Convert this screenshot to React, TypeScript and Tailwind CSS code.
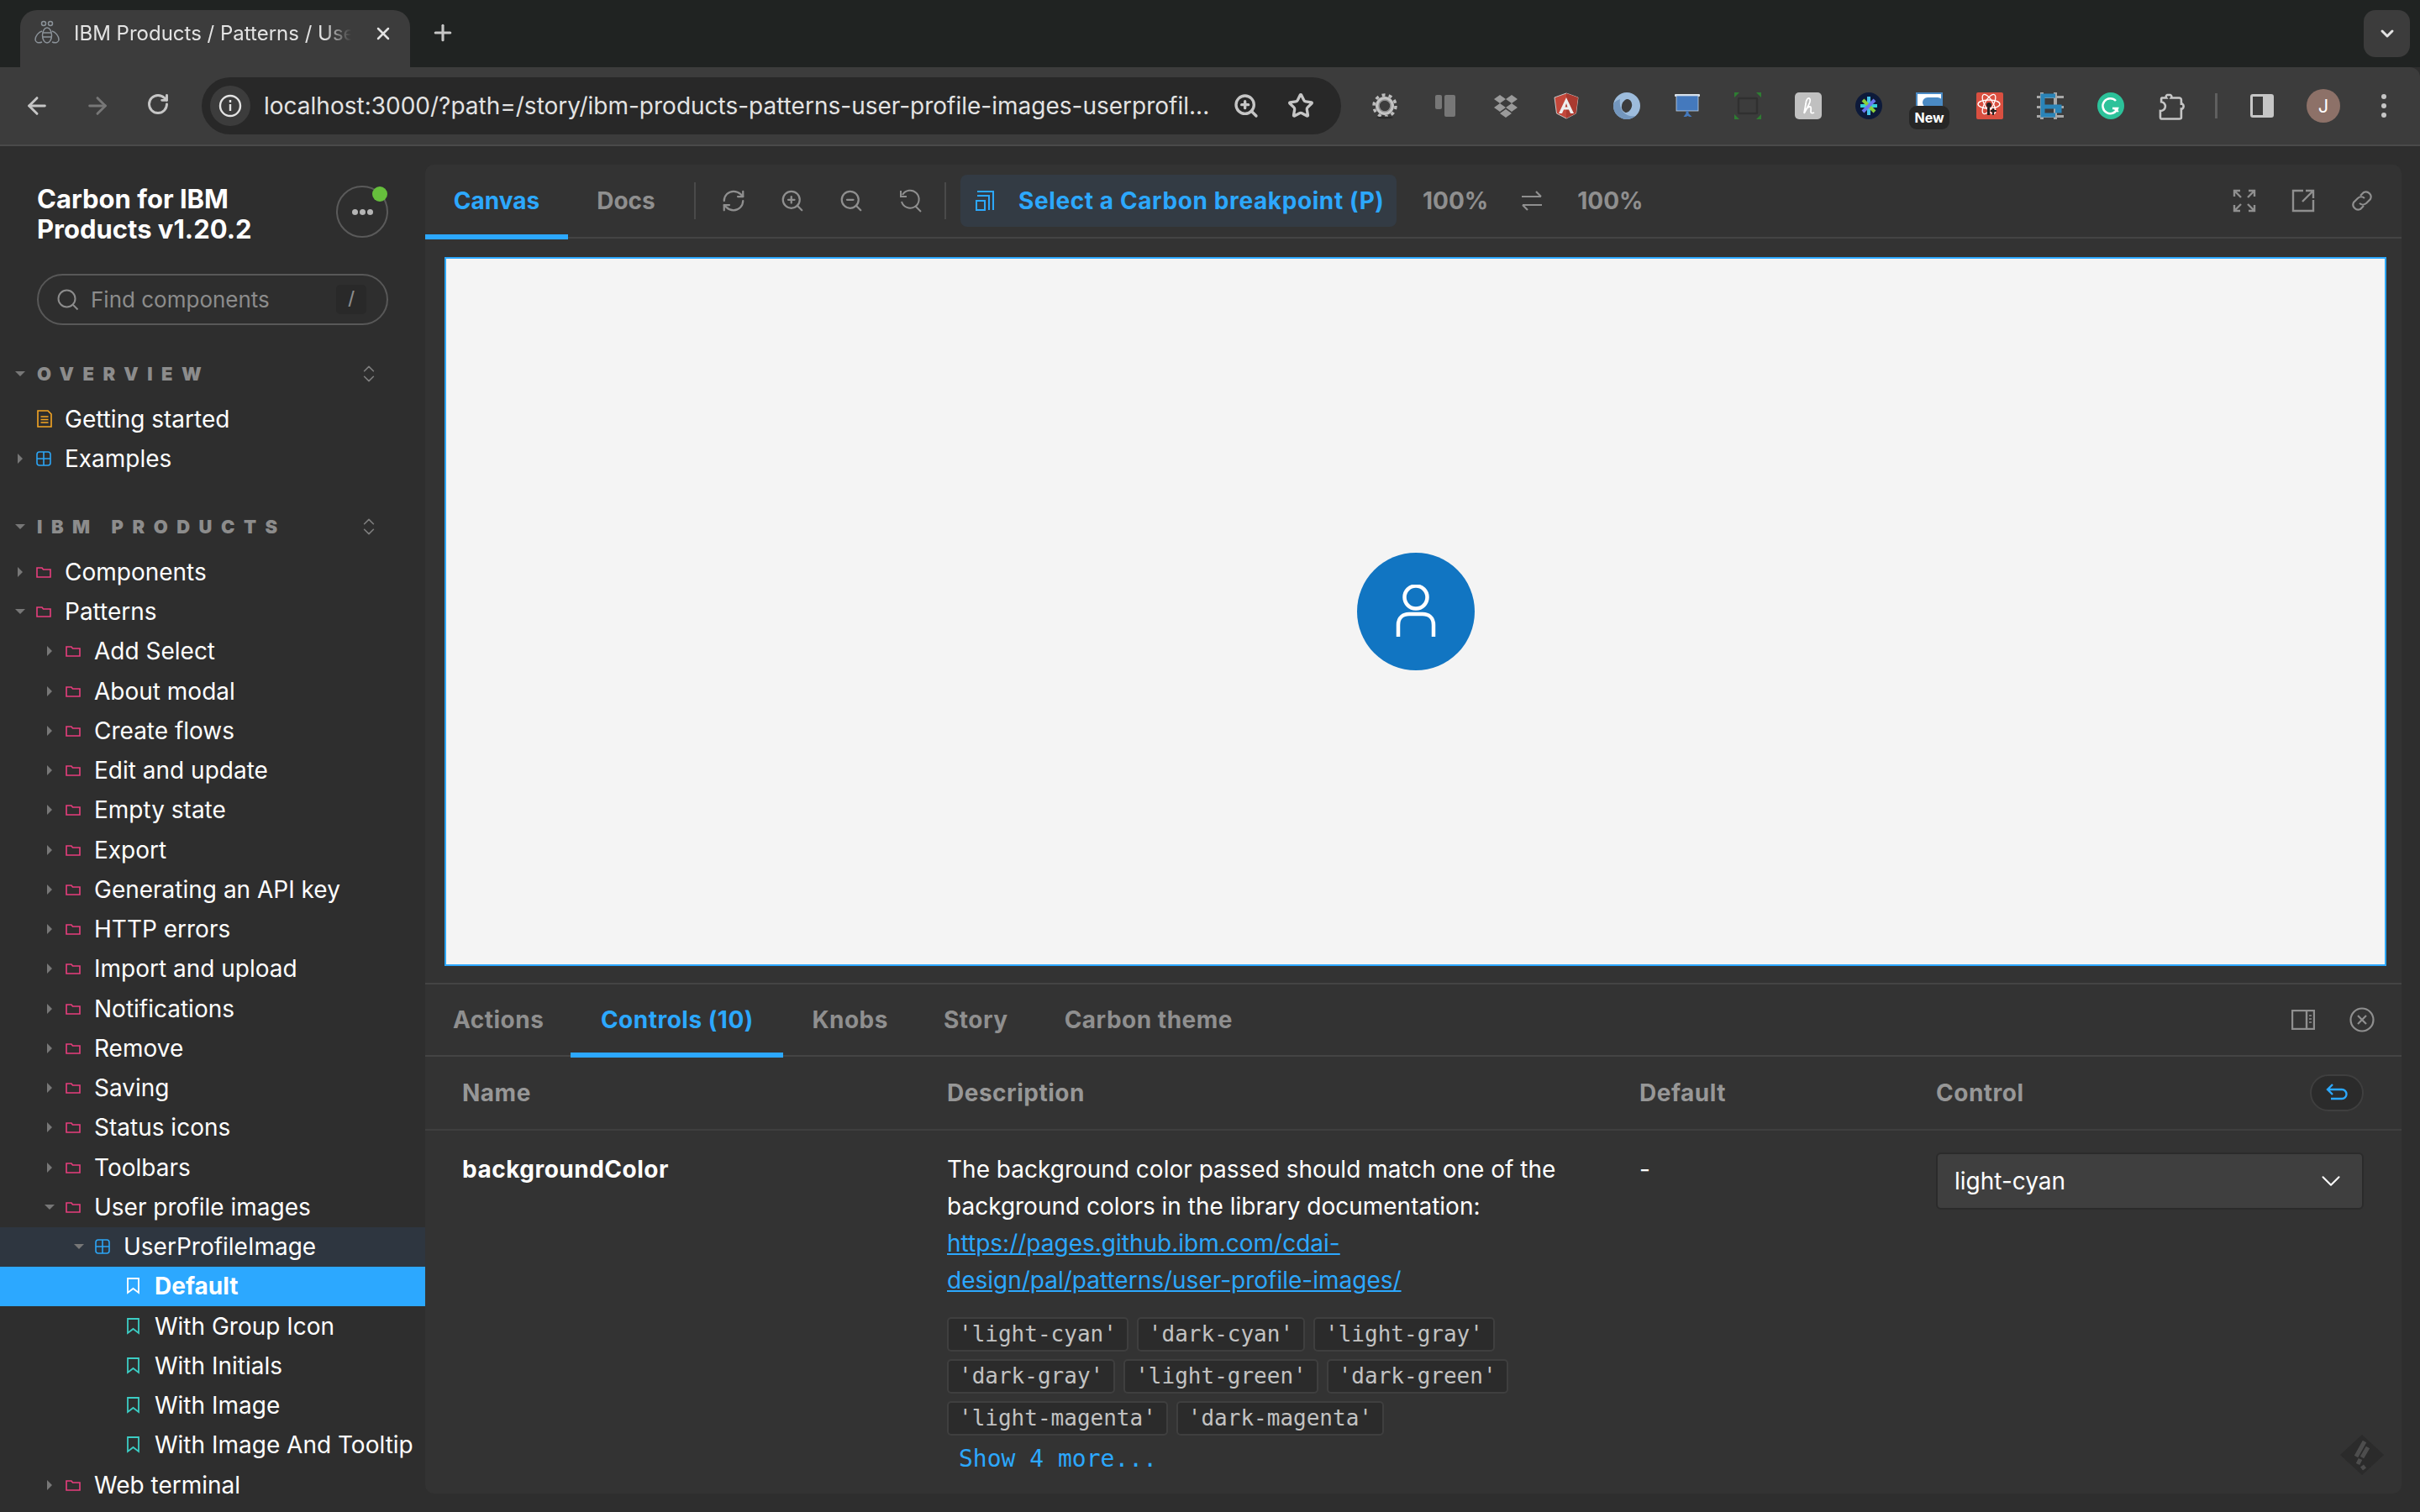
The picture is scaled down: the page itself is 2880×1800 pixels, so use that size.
import type { ReactNode } from "react";
import { ArrowLeft, ArrowRight, RotateCw, X, Plus, ChevronDown, Star, ZoomIn, ZoomOut, RefreshCw, ChevronsUpDown } from "lucide-react";

const sans = "font-['Inter','Liberation_Sans',sans-serif]";

function Svg({ size = 32, children, className }: { size?: number; children: ReactNode; className?: string }) {
    return (
        <svg width={size} height={size} viewBox="0 0 32 32" fill="none" className={className}>
            {children}
        </svg>
    );
}

const extensionIcons: ReactNode[] = [
    <Svg key="gear">
        <circle cx="16" cy="16" r="11" fill="#c4c4c4" />
        <circle cx="16" cy="16" r="13" stroke="#bdbdbd" strokeWidth="3.5" strokeDasharray="4 4.2" />
        <circle cx="16" cy="16" r="6.5" fill="#3c3c3c" />
        <circle cx="16" cy="16" r="7" stroke="#8b8b8b" strokeWidth="1.5" />
        <ellipse cx="16" cy="30" rx="10" ry="1.5" fill="#2a2a2a" />
    </Svg>,
    <Svg key="trello">
        <rect x="4" y="3" width="8" height="17" rx="2" fill="#777" />
        <rect x="15" y="3" width="13" height="26" rx="2" fill="#777" />
    </Svg>,
    <Svg key="dropbox">
        <path d="M9 3l7 5-7 5-7-5zM23 3l7 5-7 5-7-5zM9 13l7 5-7 5-7-5zM23 13l7 5-7 5-7-5zM16 20l7 5-7 5-7-5z" fill="#9a9a9a" />
    </Svg>,
    <Svg key="angular">
        <path d="M16 1L30 6l-2.5 19L16 31 4.500 25 2 6z" fill="#c4473a" stroke="#c9c9c9" strokeWidth="1" />
        <path d="M16 1L30 6l-2.5 19L16 31z" fill="#a93a30" />
        <path d="M16 6L7 25h4l2-4.500h6l2 4.500h4zM14.500 17.500L16 13l1.500 4.500z" fill="#eeeeee" />
    </Svg>,
    <Svg key="ring">
        <circle cx="16" cy="16" r="16" fill="#9dbcdc" />
        <path d="M0 16a16 16 0 0 0 16 16c4 0 8-2 10-4-10 2-20-6-18-20-5 2-8 4-8 8z" fill="#7396bd" />
        <ellipse cx="16" cy="16" rx="6" ry="8" transform="rotate(15 16 16)" fill="#3c3c3c" />
    </Svg>,
    <Svg key="board">
        <rect x="1" y="2" width="30" height="3" rx="1" fill="#dce4ec" />
        <rect x="3" y="4" width="26" height="18" fill="#4479bd" stroke="#c4d3e4" strokeWidth="0.8" />
        <path d="M14.500 22h3v3l4 4h-3l-2-1-2 1h-3l3-4z" fill="#4479bd" />
    </Svg>,
    <Svg key="frame">
        <path d="M0 0h6L0 6zM32 0v6l-6-6zM0 32v-6l6 6zM32 32h-6l6-6z" fill="#2e7d32" />
        <rect x="5" y="7" width="22" height="18" rx="1" stroke="#303030" strokeWidth="2.500" />
    </Svg>,
    <Svg key="honey">
        <rect width="32" height="32" rx="5" fill="#c0c0c0" />
        <path d="M11 25C14 19 20 11 18 8 16 5 13 9 13 14L11 25C13 20 16 17 18 17 20 17 19 21 19 23 19 25 21 25 23 24" stroke="#fff" strokeWidth="1.800" />
    </Svg>,
    <Svg key="star">
        <circle cx="16" cy="16" r="16" fill="#0d1a3a" />
        <path d="M16 5v22" stroke="#44c4e8" strokeWidth="4" />
        <path d="M6 16h20" stroke="#35cfd8" strokeWidth="4" />
        <path d="M9 9l14 14" stroke="#8dd03a" strokeWidth="4" />
        <path d="M23 9L9 23" stroke="#6a76ee" strokeWidth="4" />
    </Svg>,
    <div key="new" className="relative w-[32px] h-[32px]">
        <div className="w-[32px] h-[20px] bg-white border-2 border-[#4a8ac4] overflow-hidden">
            <div className="w-[24px] h-[12px] ml-[6px] mt-[4px] rounded-full bg-[#4a8ac4]" />
        </div>
        <span className={`${sans} absolute left-[-8px] top-[16px] w-[48px] h-[28px] rounded-[9px] bg-[#262626] text-white text-[16px] font-bold flex items-center justify-center`}>New</span>
    </div>,
    <Svg key="atom">
        <rect width="32" height="32" rx="2" fill="#d94f40" />
        <g stroke="#fff" strokeWidth="1.3">
            <ellipse cx="15" cy="14" rx="13" ry="5" />
            <ellipse cx="15" cy="14" rx="13" ry="5" transform="rotate(60 15 14)" />
            <ellipse cx="15" cy="14" rx="13" ry="5" transform="rotate(120 15 14)" />
        </g>
        <circle cx="15" cy="15" r="3" fill="#222" />
        <path d="M13 18h3v9h-3zM19 19h2v8h-2zM17 21h7v2h-7z" fill="#222" />
    </Svg>,
    <Svg key="circuit">
        <g fill="#a8a8a8">
            <rect x="4" y="0" width="4" height="32" />
            <rect x="20" y="0" width="4" height="32" />
            <rect x="0" y="4" width="32" height="3" />
            <rect x="0" y="16" width="32" height="3" />
            <rect x="0" y="27" width="32" height="3" />
        </g>
        <path d="M22 4H7v23h15" stroke="#2a84b8" strokeWidth="5" />
        <path d="M7 17h20v5h-5" stroke="#2a84b8" strokeWidth="5" />
    </Svg>,
    <Svg key="grammarly">
        <circle cx="16" cy="16" r="16" fill="#2cc29a" />
        <path d="M22 10a9 9 0 1 0 2 9h-6" stroke="#fff" strokeWidth="2.500" />
        <path d="M20 19l5 4" stroke="#fff" strokeWidth="2" />
    </Svg>,
    <Svg key="puzzle" size={38}>
        <path d="M7 8h5a2 2 0 0 1 1-3h3a2 2 0 0 1 1 3h8c1 0 2 1 2 2v4h1a3 3 0 0 1 0 5h-1v9c0 1-1 1-2 1H7c-1 0-1-1-1-2v-6a4 4 0 0 0 1-9V9c0-1 0-1 1-1z" stroke="#c6c6c6" strokeWidth="2.200" transform="translate(-1 0)" />
    </Svg>,
];

type Kind = "folder" | "component" | "story" | "doc";

const treeRows: { label: string; level: number; kind: Kind; open?: boolean; noArrow?: boolean; hover?: boolean; active?: boolean }[] = [
    { label: "Components", level: 0, kind: "folder" },
    { label: "Patterns", level: 0, kind: "folder", open: true },
    { label: "Add Select", level: 1, kind: "folder" },
    { label: "About modal", level: 1, kind: "folder" },
    { label: "Create flows", level: 1, kind: "folder" },
    { label: "Edit and update", level: 1, kind: "folder" },
    { label: "Empty state", level: 1, kind: "folder" },
    { label: "Export", level: 1, kind: "folder" },
    { label: "Generating an API key", level: 1, kind: "folder" },
    { label: "HTTP errors", level: 1, kind: "folder" },
    { label: "Import and upload", level: 1, kind: "folder" },
    { label: "Notifications", level: 1, kind: "folder" },
    { label: "Remove", level: 1, kind: "folder" },
    { label: "Saving", level: 1, kind: "folder" },
    { label: "Status icons", level: 1, kind: "folder" },
    { label: "Toolbars", level: 1, kind: "folder" },
    { label: "User profile images", level: 1, kind: "folder", open: true },
    { label: "UserProfileImage", level: 2, kind: "component", open: true, hover: true },
    { label: "Default", level: 3, kind: "story", noArrow: true, active: true },
    { label: "With Group Icon", level: 3, kind: "story", noArrow: true },
    { label: "With Initials", level: 3, kind: "story", noArrow: true },
    { label: "With Image", level: 3, kind: "story", noArrow: true },
    { label: "With Image And Tooltip", level: 3, kind: "story", noArrow: true },
    { label: "Web terminal", level: 1, kind: "folder" },
];

function KindIcon({ kind, active }: { kind: Kind; active?: boolean }) {
    if (kind === "folder") {
        return (
            <svg width="18" height="14" viewBox="0 0 18 14" fill="none" stroke="#e83e7d" strokeWidth="1.6">
                <path d="M1 2h6l1.500 2H17v9H1z" />
            </svg>
        );
    }
    if (kind === "component") {
        return (
            <svg width="18" height="18" viewBox="0 0 18 18" fill="none" stroke="#2ca5f5" strokeWidth="1.6">
                <rect x="1" y="1" width="16" height="16" rx="3" />
                <path d="M9 1v16M1 9h16" />
            </svg>
        );
    }
    if (kind === "doc") {
        return (
            <svg width="18" height="21" viewBox="0 0 18 21" fill="none" stroke="#f5a623" strokeWidth="1.6">
                <path d="M1 1h12l4 4v15H1z" />
                <path d="M4.500 8h9M4.500 11.500h9M4.500 15h9" />
            </svg>
        );
    }
    return (
        <svg width="15" height="20" viewBox="0 0 15 20" fill="none" stroke={active ? "#ffffff" : "#3ccdc4"} strokeWidth="1.8">
            <path d="M1 1h13v17l-6.500-5L1 18z" />
        </svg>
    );
}

function Caret({ open }: { open?: boolean }) {
    return open ? (
        <div className="w-0 h-0 border-x-[6px] border-x-transparent border-t-[6px] border-t-[#777777]" />
    ) : (
        <div className="w-0 h-0 border-y-[6px] border-y-transparent border-l-[6px] border-l-[#777777]" />
    );
}

function TreeRow({ label, level, kind, open, noArrow, hover, active }: (typeof treeRows)[number]) {
    const indent = ["pl-[18px]", "pl-[53px]", "pl-[88px]", "pl-[123px]"][level];
    return (
        <div className={`flex items-center h-[47.25px] ${indent} ${hover ? "bg-[#2e3640]" : ""} ${active ? "bg-[#2ca8ff] font-bold" : ""}`}>
            <div className="w-[12px] flex justify-center shrink-0">{!noArrow && <Caret open={open} />}</div>
            <div className={`w-[18px] flex justify-center shrink-0 ${level === 3 ? "ml-[14px]" : "ml-[13px]"}`}>
                <KindIcon kind={kind} active={active} />
            </div>
            <span className={`text-[28px] leading-none text-white whitespace-nowrap ${level === 3 ? "ml-[17px]" : "ml-[16px]"}`}>{label}</span>
        </div>
    );
}

function SectionHead({ label }: { label: string }) {
    return (
        <div className="flex items-center h-[40px] pl-[18px] pr-[54px]">
            <div className="w-[12px] flex justify-center"><Caret open /></div>
            <span className="ml-[14px] text-[22px] font-black tracking-[10.500px] text-[#8c8c8c] whitespace-nowrap flex-1">{label}</span>
            <ChevronsUpDown size={26} strokeWidth={1.5} className="text-[#7d7d7d]" />
        </div>
    );
}

function ToolIcon({ children }: { children: ReactNode }) {
    return <div className="w-[70px] h-[40px] flex items-center justify-center text-[#8f8f8f]">{children}</div>;
}

function Sidebar() {
    return (
        <div className="w-[506px] shrink-0 bg-[#2e2e2e]">
            <div className="flex items-start justify-between pl-[44px] pr-[44px] pt-[47px]">
                <div className="text-[31px] leading-[36px] font-bold text-white mt-[-2px]">
                    Carbon for IBM<br />Products v1.20.2
                </div>
                <div className="relative w-[62px] h-[62px] rounded-full border-2 border-[#5a5a5a] flex items-center justify-center gap-[2px]">
                    <span className="w-[7px] h-[7px] rounded-full bg-[#b5b5b5]" />
                    <span className="w-[7px] h-[7px] rounded-full bg-[#b5b5b5]" />
                    <span className="w-[7px] h-[7px] rounded-full bg-[#b5b5b5]" />
                    <span className="absolute right-[-1px] top-[-1px] w-[18px] h-[18px] rounded-full bg-[#66bf3c]" />
                </div>
            </div>
            <div className="mx-[44px] mt-[35px] h-[61px] rounded-full border-2 border-[#585858] flex items-center pl-[22px] pr-[24px]">
                <svg width="26" height="26" viewBox="0 0 26 26" fill="none" stroke="#8c8c8c" strokeWidth="2">
                    <circle cx="11.500" cy="11.500" r="10" />
                    <path d="M18.500 18.500l6 6" />
                </svg>
                <span className="ml-[14px] text-[26px] text-[#8c8c8c] flex-1">Find components</span>
                <span className="w-[36px] h-[35px] rounded-[5px] bg-[#292929] text-[#8c8c8c] text-[26px] flex items-center justify-center font-['Liberation_Sans',sans-serif]">/</span>
            </div>
            <div className="mt-[38px]"><SectionHead label="OVERVIEW" /></div>
            <div className="mt-[10px] flex items-center h-[47px] pl-[44px]">
                <KindIcon kind="doc" />
                <span className="ml-[15px] text-[28px] leading-none text-white">Getting started</span>
            </div>
            <TreeRow label="Examples" level={0} kind="component" />
            <div className="mt-[38px]"><SectionHead label="IBM PRODUCTS" /></div>
            <div className="mt-[10px]">
                {treeRows.map((row) => (
                    <TreeRow key={row.label} {...row} />
                ))}
            </div>
        </div>
    );
}

function CanvasBar() {
    return (
        <div className="h-[88px] flex items-center border-b-2 border-[#444444] relative">
            <div className="w-[170px] h-[88px] flex items-center justify-center text-[#2ca8ff] text-[28px] font-bold relative">
                Canvas
                <span className="absolute left-0 right-0 bottom-[-2px] h-[6px] bg-[#2ca8ff]" />
            </div>
            <div className="w-[134px] text-center text-[28px] font-bold text-[#8f8f8f] ml-[2px]">Docs</div>
            <div className="w-[2px] h-[44px] bg-[#4a4a4a] ml-[14px]" />
            <div className="ml-[10px] flex">
                <ToolIcon><RefreshCw size={30} strokeWidth={1.8} /></ToolIcon>
                <ToolIcon><ZoomIn size={30} strokeWidth={1.8} /></ToolIcon>
                <ToolIcon><ZoomOut size={30} strokeWidth={1.8} /></ToolIcon>
                <ToolIcon>
                    <svg width="30" height="30" viewBox="0 0 30 30" fill="none" stroke="currentColor" strokeWidth="2">
                        <path d="M6 8a10.500 10.500 0 1 1-1 8" />
                        <path d="M4 3v7h7" />
                        <path d="M21 21l7 7" />
                    </svg>
                </ToolIcon>
            </div>
            <div className="w-[2px] h-[44px] bg-[#4a4a4a] ml-[6px]" />
            <div className="ml-[17px] w-[519px] h-[62px] rounded-[8px] bg-[#333b44] flex items-center pl-[18px] text-[#2ca8ff] text-[28px] font-bold tracking-[0.600px]">
                <svg width="22" height="24" viewBox="0 0 22 24" fill="none" stroke="currentColor" strokeWidth="2">
                    <path d="M2 1h19v22M2 6h14v17M1 12h10v11H1z" />
                </svg>
                <span className="ml-[29px] whitespace-nowrap">Select a Carbon breakpoint (P)</span>
            </div>
            <span className="ml-[31px] text-[28px] font-bold text-[#8f8f8f]">100%</span>
            <svg className="ml-[38px] text-[#8f8f8f]" width="28" height="26" viewBox="0 0 28 26" fill="none" stroke="currentColor" strokeWidth="2.200">
                <path d="M2 8h23M19 2l6 6M26 18H3M9 24l-6-6" />
            </svg>
            <span className="ml-[40px] text-[28px] font-bold text-[#8f8f8f]">100%</span>
            <div className="ml-auto flex items-center pr-[6px]">
                <div className="w-[70px] flex justify-center text-[#8f8f8f]">
                    <svg width="28" height="28" viewBox="0 0 28 28" fill="none" stroke="currentColor" strokeWidth="2.400">
                        <path d="M2 9V2h7M19 2h7v7M2 19v7h7M26 19v7h-7M3 3l7 7M25 3l-7 7M3 25l7-7M25 25l-7-7" />
                    </svg>
                </div>
                <div className="w-[70px] flex justify-center text-[#8f8f8f]">
                    <svg width="28" height="28" viewBox="0 0 28 28" fill="none" stroke="currentColor" strokeWidth="2.400">
                        <path d="M14 2H2v24h24V13M17 2h9v9M26 2L13 15" />
                    </svg>
                </div>
                <div className="w-[70px] flex justify-center text-[#8f8f8f]">
                    <svg width="28" height="28" viewBox="0 0 28 28" fill="none" stroke="currentColor" strokeWidth="2.200">
                        <path d="M12 8l4-4a6 6 0 0 1 8 8l-5 5a6 6 0 0 1-8 0" />
                        <path d="M16 20l-4 4a6 6 0 0 1-8-8l5-5a6 6 0 0 1 8 0" />
                    </svg>
                </div>
                <div className="w-[6px]" />
            </div>
        </div>
    );
}

const chips = ["light-cyan", "dark-cyan", "light-gray", "dark-gray", "light-green", "dark-green", "light-magenta", "dark-magenta"];

function ControlsPanel() {
    return (
        <div className="flex-1 border-t-2 border-[#444444] relative">
            <div className="h-[86px] flex items-center border-b-2 border-[#444444] text-[28px] font-bold tracking-[0.500px] text-[#8f8f8f]">
                <div className="pl-[33px] pr-[32px] whitespace-nowrap">Actions</div>
                <div className="relative h-[86px] w-[253px] flex items-center justify-center text-[#2ca8ff] whitespace-nowrap">
                    Controls (10)
                    <span className="absolute left-0 right-0 bottom-[-2px] h-[6px] bg-[#2ca8ff]" />
                </div>
                <div className="pl-[34px] pr-[33px] whitespace-nowrap">Knobs</div>
                <div className="px-[33px] whitespace-nowrap">Story</div>
                <div className="px-[34px] whitespace-nowrap">Carbon theme</div>
                <div className="ml-auto flex items-center pr-[12px]">
                    <div className="w-[70px] flex justify-center">
                        <svg width="28" height="24" viewBox="0 0 28 24" fill="none" stroke="#8f8f8f" strokeWidth="2.400">
                            <rect x="1" y="1" width="26" height="22" />
                            <path d="M18 1v22" />
                            <path d="M21 7h3M21 11h3M21 15h3" strokeWidth="1.500" />
                        </svg>
                    </div>
                    <div className="w-[70px] flex justify-center">
                        <svg width="30" height="30" viewBox="0 0 30 30" fill="none" stroke="#8f8f8f" strokeWidth="2.200">
                            <circle cx="15" cy="15" r="13.500" />
                            <path d="M10 10l10 10M20 10L10 20" />
                        </svg>
                    </div>
                </div>
            </div>
            <div className="grid grid-cols-[577px_824px_353px_509px] items-center h-[88px] pl-[44px] border-b-2 border-[#3f3f3f] text-[28px] font-bold tracking-[0.500px] text-[#979797]">
                <div>Name</div>
                <div>Description</div>
                <div>Default</div>
                <div className="flex items-center justify-between">
                    Control
                    <div className="w-[64px] h-[44px] rounded-full bg-[#2b2b2b] border-2 border-[#3f3f3f] flex items-center justify-center">
                        <svg width="28" height="24" viewBox="0 0 28 24" fill="none" stroke="#2ca8ff" strokeWidth="2.400">
                            <path d="M9 2L3 8l6 6M3 8h17a5 5 0 0 1 0 11H7" />
                        </svg>
                    </div>
                </div>
            </div>
            <div className="grid grid-cols-[577px_824px_353px_509px] items-start pl-[44px] pt-[24px] text-[28px] text-white">
                <div className="font-bold tracking-[0.500px] leading-[44px]">backgroundColor</div>
                <div>
                    <div className="w-[760px] leading-[44px]">
                        The background color passed should match one of the background colors in the library documentation:{" "}
                        <span className="text-[#2ca8ff] underline">https://pages.github.ibm.com/cdai-design/pal/patterns/user-profile-images/</span>
                    </div>
                    <div className="w-[690px] flex flex-wrap gap-x-[10px] gap-y-[9px] mt-[22px] font-['DejaVu_Sans_Mono',monospace] text-[26px] text-[#c2c2c2]">
                        {chips.map((chip) => (
                            <span key={chip} className="h-[41px] px-[12px] flex items-center rounded-[5px] bg-[#2b2b2b] border-2 border-[#3f3f3f] whitespace-nowrap">
                                &apos;{chip}&apos;
                            </span>
                        ))}
                    </div>
                    <div className="mt-[10px] pl-[14px] font-['DejaVu_Sans_Mono',monospace] text-[28px] leading-[36px] text-[#2ca8ff]">Show 4 more...</div>
                </div>
                <div className="leading-[44px]">-</div>
                <div className="mt-[2px] h-[68px] rounded-[6px] bg-[#3f3f3f] border-2 border-[#2b2b2b] flex items-center justify-between pl-[20px] pr-[18px]">
                    light-cyan
                    <ChevronDown size={38} strokeWidth={1.3} className="text-white" />
                </div>
            </div>
            <svg className="absolute right-[21px] bottom-[22px]" width="52" height="48" viewBox="0 0 52 48">
                <path d="M26 0l26 24-26 24L0 24z" fill="#2b2b2b" />
                <path d="M29 8L19 26M33 15l-7 12M24 29l-3 6M26 37l3 4" stroke="#4d4d4d" strokeWidth="5" />
            </svg>
        </div>
    );
}

export default function App() {
    return (
        <div className={`${sans} w-[2880px] h-[1800px] overflow-hidden bg-[#2e2e2e] flex flex-col`}>
            {/* browser tab strip */}
            <div className="h-[80px] bg-[#202322] flex items-end pl-[24px] shrink-0 relative">
                <div className="w-[464px] h-[68px] bg-[#3c3c3c] rounded-t-[20px] flex items-center pl-[16px] pb-[12px]">
                    <svg width="32" height="32" viewBox="0 0 32 32" fill="none" stroke="#8b9299" strokeWidth="1.500">
                        <circle cx="12" cy="4" r="2.500" />
                        <circle cx="20" cy="4" r="2.500" />
                        <ellipse cx="16" cy="18" rx="5.500" ry="9" />
                        <path d="M11 15h10M11 20h10M10 13c-4 1-8 6-8 10 0 3 3 5 8 3M22 13c4 1 8 6 8 10 0 3-3 5-8 3" />
                    </svg>
                    <span className="ml-[16px] w-[330px] text-[24px] text-[#e3e3e3] whitespace-nowrap overflow-hidden [mask-image:linear-gradient(to_right,black_90%,transparent)]">IBM Products / Patterns / User</span>
                    <X size={24} strokeWidth={2.500} className="ml-[26px] text-[#e3e3e3]" />
                </div>
                <Plus size={30} strokeWidth={2.500} className="ml-[24px] mb-[26px] text-[#c6c6c6]" />
                <div className="absolute right-[12px] top-[12px] w-[55px] h-[56px] rounded-[14px] bg-[#3c3c3c] flex items-center justify-center">
                    <ChevronDown size={24} strokeWidth={3} className="text-[#e3e3e3]" />
                </div>
            </div>

            {/* browser toolbar */}
            <div className="h-[94px] bg-[#3c3c3c] border-b-2 border-[#4a4a4a] flex items-center shrink-0 rounded-tr-[12px]">
                <div className="w-[240px] flex pl-[8px]">
                    <div className="w-[72px] flex justify-center text-[#c6c6c6]"><ArrowLeft size={32} strokeWidth={2.200} /></div>
                    <div className="w-[72px] flex justify-center text-[#777777]"><ArrowRight size={32} strokeWidth={2.200} /></div>
                    <div className="w-[72px] flex justify-center text-[#c6c6c6]"><RotateCw size={28} strokeWidth={2.500} /></div>
                </div>
                <div className="w-[1356px] h-[68px] rounded-full bg-[#282828] flex items-center pl-[10px]">
                    <div className="w-[48px] h-[48px] rounded-full bg-[#3c3c3c] flex items-center justify-center">
                        <svg width="28" height="28" viewBox="0 0 28 28" fill="none" stroke="#e3e3e3" strokeWidth="2.400">
                            <circle cx="14" cy="14" r="12" />
                            <path d="M14 12v8M14 7v3" />
                        </svg>
                    </div>
                    <span className="ml-[16px] w-[1124px] text-[28px] text-[#e3e3e3] whitespace-nowrap">localhost:3000/?path=/story/ibm-products-patterns-user-profile-images-userprofil...</span>
                    <ZoomIn size={32} strokeWidth={2.500} className="ml-[29px] text-[#c6c6c6]" />
                    <Star size={32} strokeWidth={2.500} className="ml-[33px] text-[#c6c6c6]" />
                </div>
                <div className="ml-[16px] flex items-center">
                    {extensionIcons.map((icon, i) => (
                        <div key={i} className="w-[72px] flex justify-center">{icon}</div>
                    ))}
                    <div className="w-[3px] h-[30px] bg-[#5f5f5f] ml-[16px]" />
                    <div className="ml-[39px] w-[28px] h-[28px] rounded-[3px] border-[3px] border-[#c6c6c6] flex justify-end">
                        <div className="w-[10px] bg-[#c6c6c6]" />
                    </div>
                    <div className="ml-[39px] w-[40px] h-[40px] rounded-full bg-[#8d7168] text-white text-[22px] flex items-center justify-center">J</div>
                    <div className="ml-[49px] flex flex-col gap-[5px]">
                        <span className="w-[6px] h-[6px] rounded-full bg-[#c6c6c6]" />
                        <span className="w-[6px] h-[6px] rounded-full bg-[#c6c6c6]" />
                        <span className="w-[6px] h-[6px] rounded-full bg-[#c6c6c6]" />
                    </div>
                </div>
            </div>

            <div className="flex flex-1 min-h-0">
                <Sidebar />
                <div className="mt-[22px] mb-[22px] w-[2352px] rounded-[10px] bg-[#333333] flex flex-col overflow-hidden">
                    <CanvasBar />
                    <div className="h-[884px] px-[23px] pt-[22px] pb-[18px] shrink-0">
                        <div className="h-full w-[2311px] border-2 border-[#2ca8ff] bg-[#f4f4f4] flex items-center justify-center">
                            <div className="w-[140px] h-[140px] rounded-full bg-[#1175c2] flex items-center justify-center">
                                <svg width="48" height="64" viewBox="0 0 48 64" fill="none" stroke="#ffffff" strokeWidth="4.500">
                                    <circle cx="24" cy="15" r="13.500" />
                                    <path d="M3 62V48c0-9 6-13 13-13h16c7 0 13 4 13 13v14" />
                                </svg>
                            </div>
                        </div>
                    </div>
                    <div className="h-[2px]" />
                    <ControlsPanel />
                </div>
            </div>
        </div>
    );
}
